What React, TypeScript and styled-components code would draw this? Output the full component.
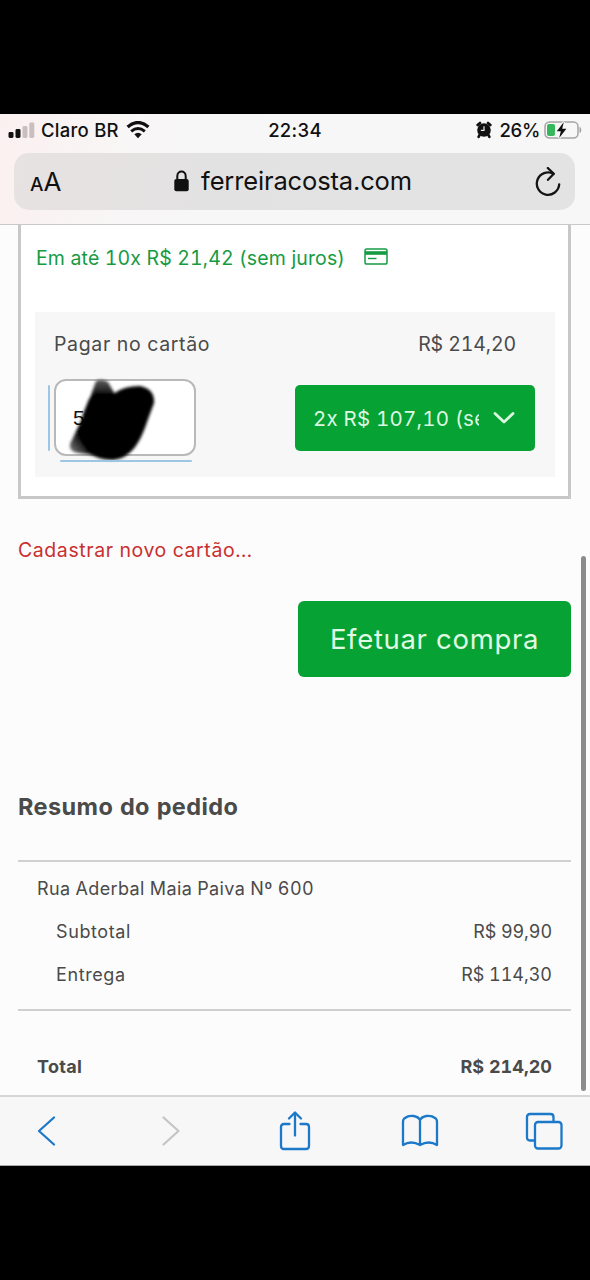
import React from 'react';
import styled, { createGlobalStyle } from 'styled-components';

const GlobalStyle = createGlobalStyle`
  * { box-sizing: border-box; }
  body { margin: 0; background: #000; }
`;

const Screen = styled.div`
  width: 590px;
  height: 1280px;
  padding: 114px 0;
  background: #000;
  display: flex;
  flex-direction: column;
  overflow: hidden;
  font-family: Inter, 'Liberation Sans', sans-serif;
  color: #4a4a4a;
`;

const BrowserHeader = styled.header`
  height: 111px;
  flex: none;
  border-bottom: 1px solid #c9c9c9;
  background: linear-gradient(100deg, #fbf0f0 0, #f8f6f6 22%, #f7f7f7 45%);
  color: #111;
`;

const StatusBar = styled.div`
  height: 39px;
  padding: 0 8px 7px;
  display: grid;
  grid-template-columns: 1fr auto 1fr;
  align-items: center;
`;

const StatusGroup = styled.div<{ $end?: boolean }>`
  display: flex;
  align-items: center;
  justify-content: ${(p) => (p.$end ? 'flex-end' : 'flex-start')};
`;

const StatusText = styled.span<{ $track?: number }>`
  font-size: 18.5px;
  line-height: 24px;
  font-weight: 500;
  white-space: nowrap;
  letter-spacing: ${(p) => p.$track ?? 0}px;
`;

const AddressBar = styled.div`
  height: 57px;
  margin: 0 15px 0 14px;
  padding: 0 14px 0 16px;
  border-radius: 15px;
  background: linear-gradient(100deg, #e8e2e2 0, #e3e2e2 35%, #e3e3e3 60%);
  display: grid;
  grid-template-columns: 60px 1fr 60px;
  align-items: center;
`;

const TextSize = styled.div`
  display: flex;
  align-items: baseline;
  padding-top: 3px;
  font-size: 19px;
  line-height: 32px;
  font-weight: 500;
  big { font-size: 26px; font-weight: 400; }
`;

const Domain = styled.div`
  display: flex;
  align-items: center;
  justify-content: center;
  gap: 12px;
  padding: 0 5px 2px 0;
  font-size: 25.5px;
  letter-spacing: -0.15px;
`;

const ReloadSlot = styled.div`
  display: flex;
  justify-content: flex-end;
`;

const Viewport = styled.main`
  position: relative;
  flex: none;
  height: 870px;
  background: #fcfcfc;
  padding: 0 19px 0 18px;
  overflow: hidden;
  font-variant-numeric: tabular-nums;
`;

const ScrollThumb = styled.div`
  position: absolute;
  top: 331px;
  right: 4.5px;
  width: 5px;
  height: 535px;
  border-radius: 3px;
  background: #8c8c8c;
`;

const Label = styled.span<{ $size?: number; $track?: number; $bold?: boolean }>`
  font-size: ${(p) => p.$size ?? 18}px;
  letter-spacing: ${(p) => p.$track ?? 0}px;
  font-weight: ${(p) => (p.$bold ? 700 : 400)};
  line-height: 28px;
  white-space: nowrap;
`;

const PaymentCard = styled.section`
  height: 274px;
  padding: 19px 13px 0 14px;
  border: 3px solid #c8c8c8;
  border-top: 0;
  background: #fff;
`;

const Installments = styled.div`
  display: flex;
  align-items: center;
  justify-content: space-between;
  width: 353px;
  height: 28px;
  padding-left: 1px;
  color: #169b43;
`;

const CardPanel = styled.div`
  margin-top: 40px;
  height: 165px;
  padding: 18px 20px 0 19px;
  background: #f7f7f7;
`;

const Row = styled.div<{ $height: number; $indent?: number; $right?: number }>`
  height: ${(p) => p.$height}px;
  padding: 0 ${(p) => p.$right ?? 0}px 0 ${(p) => p.$indent ?? 0}px;
  display: flex;
  align-items: center;
  justify-content: space-between;
`;

const PanelControls = styled.div`
  display: flex;
  align-items: flex-start;
  justify-content: space-between;
  margin-top: 21px;
`;

const CardNumber = styled.div`
  position: relative;
  width: 142px;
  height: 77px;
  padding: 0 17px;
  border: 2px solid #b9b9b9;
  border-radius: 12px;
  background: #fff;
  display: flex;
  align-items: center;
  font-family: 'Liberation Sans', sans-serif;
  font-size: 21px;
  color: #111;
  &::before, &::after { content: ''; position: absolute; background: #9cc6e4; border-radius: 2px; }
  &::before { left: -8px; top: 4px; width: 2px; height: 66px; }
  &::after { left: 4px; bottom: -8px; width: 132px; height: 2px; }
`;

const Scribble = styled.svg`
  position: absolute;
  left: 2px;
  top: -12px;
`;

const InstallmentSelect = styled.div`
  width: 240px;
  height: 66px;
  margin-top: 6px;
  padding: 0 20px 0 18px;
  border-radius: 5px;
  background: #06a233;
  color: #dcf8e0;
  display: flex;
  align-items: center;
  justify-content: space-between;
`;

const Clipped = styled.div`
  width: 166px;
  padding-top: 2px;
  overflow: hidden;
  display: flex;
`;

const NewCardLink = styled.a`
  display: flex;
  margin-top: 37px;
  color: #c93030;
`;

const BuyButton = styled.button`
  display: flex;
  align-items: center;
  justify-content: center;
  width: 273px;
  height: 76px;
  margin: 37px 0 0 auto;
  padding: 0;
  border: 0;
  border-radius: 6px;
  background: #06a233;
  color: #e0fae5;
  font-family: inherit;
`;

const SummaryTitle = styled.h2`
  display: flex;
  margin: 116px 0 0;
`;

const Summary = styled.section`
  margin-top: 39px;
  height: 151px;
  padding-top: 5px;
  border-top: 2px solid #d0d0d0;
  border-bottom: 2px solid #d0d0d0;
`;

const TotalRow = styled(Row)`
  margin-top: 34px;
`;

const Toolbar = styled.nav`
  height: 71px;
  flex: none;
  padding: 0 27px;
  border-top: 2px solid #d5d7d7;
  border-bottom: 1px solid #aaa;
  background: #f7f7f7;
  display: flex;
  align-items: center;
  justify-content: space-between;
`;

const Stroke = styled.svg<{ $color?: string; $weight?: number }>`
  display: block;
  flex: none;
  fill: none;
  stroke: ${(p) => p.$color ?? '#1c78c8'};
  stroke-width: ${(p) => p.$weight ?? 2.3};
  stroke-linecap: round;
  stroke-linejoin: round;
`;

const Glyph = styled.svg<{ $left?: number; $right?: number }>`
  display: block;
  flex: none;
  margin-left: ${(p) => p.$left ?? 0}px;
  margin-right: ${(p) => p.$right ?? 0}px;
`;

const SignalIcon = () => (
  <Glyph width="33" height="18" viewBox="0 0 33 18">
    <rect x="0.5" y="11" width="5" height="6" rx="1.4" fill="#111" />
    <rect x="7.5" y="8" width="5" height="9" rx="1.4" fill="#111" />
    <rect x="14.5" y="5" width="5" height="12" rx="1.4" fill="#c9bfc0" />
    <rect x="21.3" y="1.5" width="5" height="15.5" rx="1.4" fill="#c9bfc0" />
  </Glyph>
);

const WifiIcon = () => (
  <Glyph $left={7} width="24" height="18" viewBox="0 0 24 18">
    <path d="M1.6 6.1Q12-3 22.4 6.1" fill="none" stroke="#111" strokeWidth="3.3" />
    <path d="M5.2 10.3Q12 4.7 18.8 10.3" fill="none" stroke="#111" strokeWidth="3" />
    <path d="M8.3 13.3Q12 10.2 15.7 13.3L12 17.3Z" fill="#111" />
  </Glyph>
);

const AlarmIcon = () => (
  <Glyph $right={7} width="16" height="18" viewBox="0 0 16 18">
    <circle cx="8" cy="9" r="6.8" fill="#111" />
    <path d="M1.6 4L4 2M14.4 4L12 2M3.6 14L2.6 15.8M12.4 14L13.4 15.8" stroke="#111" strokeWidth="2.6" strokeLinecap="round" />
    <path d="M8 5.2V9.3H4.9" fill="none" stroke="#eee" strokeWidth="1.2" />
  </Glyph>
);

const BatteryIcon = () => (
  <Glyph $left={4} width="38" height="20" viewBox="0 0 38 20">
    <rect x="1" y="2" width="33" height="16" rx="4.5" fill="none" stroke="#a5a5a5" strokeWidth="1.5" />
    <rect x="3" y="4" width="8" height="12" rx="2" fill="#35b75c" />
    <path d="M36 7.5Q38 10 36 12.5Z" fill="#a5a5a5" stroke="#a5a5a5" />
    <path d="M19.8 2L12.8 11.2H16.8L15.2 18L22.4 8.8H18.2Z" fill="#111" stroke="#f7f7f7" strokeWidth="2.4" paintOrder="stroke" />
  </Glyph>
);

const LockIcon = () => (
  <Glyph width="15" height="22" viewBox="0 0 15 22">
    <path d="M3.3 10V6.3C3.3 0 11.7 0 11.7 6.3V10" fill="none" stroke="#111" strokeWidth="2" />
    <rect x="0.3" y="9" width="14.4" height="12.3" rx="2" fill="#111" />
  </Glyph>
);

const ReloadIcon = () => (
  <Stroke $color="#151515" $weight={2.3} width="26" height="30" viewBox="0 0 26 30">
    <path d="M24.2 17.3A11.2 11.2 0 1 1 18.4 6.8" />
    <path d="M12.8 1L18.8 6.8L13 12.8" />
  </Stroke>
);

const CreditCardIcon = () => (
  <Glyph width="24" height="20" viewBox="0 0 24 20">
    <rect x="1" y="1" width="22" height="15" rx="1.8" fill="none" stroke="#169b43" strokeWidth="1.5" />
    <rect x="1" y="3.2" width="22" height="3.6" fill="#169b43" />
    <path d="M4 10.5H12.5" stroke="#169b43" strokeWidth="1.4" />
  </Glyph>
);

const formatPrice = (value: number) => `R$ ${value.toFixed(2).replace('.', ',')}`;

const summaryItems = [
  { name: 'Subtotal', value: 99.9, track: -0.1 },
  { name: 'Entrega', value: 114.3, track: -0.05 },
];

export default function App() {
  return (
    <Screen>
      <GlobalStyle />
      <BrowserHeader>
        <StatusBar>
          <StatusGroup>
            <SignalIcon />
            <StatusText $track={0.25}>Claro BR</StatusText>
            <WifiIcon />
          </StatusGroup>
          <StatusText $track={0.3}>22:34</StatusText>
          <StatusGroup $end>
            <AlarmIcon />
            <StatusText $track={-0.3}>26%</StatusText>
            <BatteryIcon />
          </StatusGroup>
        </StatusBar>
        <AddressBar>
          <TextSize>A<big>A</big></TextSize>
          <Domain><LockIcon />ferreiracosta.com</Domain>
          <ReloadSlot><ReloadIcon /></ReloadSlot>
        </AddressBar>
      </BrowserHeader>

      <Viewport>
        <PaymentCard>
          <Installments>
            <Label $size={19.5} $track={0.14}>Em até 10x R$ 21,42 (sem juros)</Label>
            <CreditCardIcon />
          </Installments>
          <CardPanel>
            <Row $height={28} $right={19}>
              <Label $size={19.5} $track={0.65}>Pagar no cartão</Label>
              <Label $size={19.5} $track={-0.1}>{formatPrice(214.2)}</Label>
            </Row>
            <PanelControls>
              <CardNumber>
                5
                <Scribble width="112" height="100" viewBox="58 369 112 100">
                  <defs>
                    <filter id="soft" x="-20%" y="-20%" width="140%" height="140%">
                      <feGaussianBlur stdDeviation="1.4" />
                    </filter>
                    <linearGradient id="tip" x1="0" y1="378" x2="0" y2="398" gradientUnits="userSpaceOnUse">
                      <stop offset="0" stopColor="#666" />
                      <stop offset="1" stopColor="#000" />
                    </linearGradient>
                    <linearGradient id="tail" x1="69" y1="450" x2="84" y2="438" gradientUnits="userSpaceOnUse">
                      <stop offset="0" stopColor="#777" />
                      <stop offset="1" stopColor="#000" />
                    </linearGradient>
                  </defs>
                  <g filter="url(#soft)">
                    <path d="M96 381Q102 378 108 382L116 396L108 415H84Z" fill="url(#tip)" />
                    <path d="M82 419L70 444Q69 452 78 453L94 455L100 430Z" fill="url(#tail)" />
                    <path d="M89 399L96 392L115 393Q124 386 140 386Q155 389 154 403L147 422C141 440 132 459 112 460Q96 459 87 452L78 437Q80 428 83 414Z" fill="#000" />
                  </g>
                </Scribble>
              </CardNumber>
              <InstallmentSelect>
                <Clipped><Label $size={20.5} $track={0.2}>2x R$ 107,10 (sem juros)</Label></Clipped>
                <Stroke $color="#dcf8e0" $weight={2.8} width="22" height="14" viewBox="0 0 22 14">
                  <path d="M2 2.5L11 11L20 2.5" />
                </Stroke>
              </InstallmentSelect>
            </PanelControls>
          </CardPanel>
        </PaymentCard>

        <NewCardLink><Label $size={19.5} $track={0.58}>Cadastrar novo cartão...</Label></NewCardLink>
        <BuyButton><Label $size={27.5} $track={0.68}>Efetuar compra</Label></BuyButton>

        <SummaryTitle><Label $bold $size={23.5} $track={0.4}>Resumo do pedido</Label></SummaryTitle>
        <Summary>
          <Row $height={43} $indent={19}><Label $track={0.35}>Rua Aderbal Maia Paiva Nº 600</Label></Row>
          {summaryItems.map((item) => (
            <Row key={item.name} $height={43} $indent={38} $right={19}>
              <Label $track={0.6}>{item.name}</Label>
              <Label $track={item.track}>{formatPrice(item.value)}</Label>
            </Row>
          ))}
        </Summary>
        <TotalRow $height={43} $indent={19} $right={19}>
          <Label $bold $track={0.3}>Total</Label>
          <Label $bold>{formatPrice(214.2)}</Label>
        </TotalRow>
        <ScrollThumb />
      </Viewport>

      <Toolbar>
        <Stroke width="38" height="32" viewBox="0 0 20 32"><path d="M18 2.5L3 16L18 29.5" /></Stroke>
        <Stroke $color="#c5c5c5" width="38" height="32" viewBox="0 0 20 32"><path d="M2.5 2.5L17.5 16L2.5 29.5" /></Stroke>
        <Stroke width="38" height="40" viewBox="0 0 32 40">
          <path d="M10.5 13H5Q2 13 2 16V35Q2 38 5 38H27Q30 38 30 35V16Q30 13 27 13H21.5M16 24.5V2M10 7.5L16 1.5L22 7.5" />
        </Stroke>
        <Stroke width="38" height="34" viewBox="0 0 38 34">
          <path d="M19 6C17 2 9 0 4 4Q2 5 2 8V31Q10 26 19 31Q28 26 36 31V8Q36 5 34 4C29 0 21 2 19 6V31" />
        </Stroke>
        <Stroke width="38" height="38" viewBox="0 0 38 38">
          <path d="M9.5 28.5H5Q2 28.5 2 25.5V5Q2 2 5 2H25.5Q28.5 2 28.5 5V9.5" />
          <rect x="10" y="10" width="26.5" height="26.5" rx="3" />
        </Stroke>
      </Toolbar>
    </Screen>
  );
}
